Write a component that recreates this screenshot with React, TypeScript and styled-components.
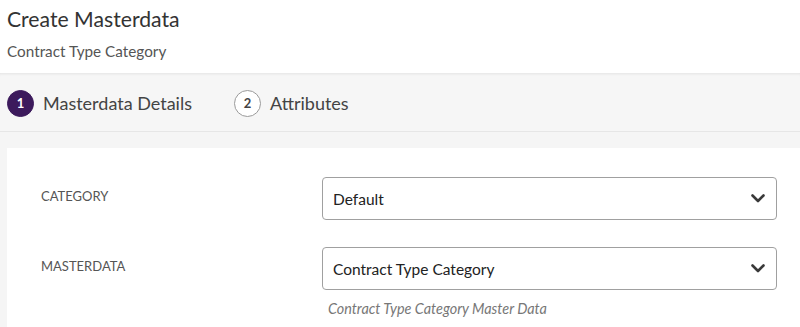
import styled, { createGlobalStyle } from "styled-components";

const GlobalStyle = createGlobalStyle`
  html, body {
    margin: 0;
    padding: 0;
    background: #ffffff;
    font-family: Lato, "Open Sans", sans-serif;
    color: #333333;
    overflow: hidden;
  }
`;

const Page = styled.div`
  width: 800px;
  height: 327px;
  display: flex;
  flex-direction: column;
  background: #f5f5f5;
`;

const Header = styled.header`
  height: 73px;
  padding: 6px 7px 0;
  box-sizing: border-box;
  background: #ffffff;
`;

const Title = styled.h1`
  margin: 0;
  font-size: 21.2px;
  font-weight: 400;
  line-height: 26px;
  color: #333333;
`;

const Subtitle = styled.div`
  margin-top: 10px;
  font-size: 15.3px;
  line-height: 19px;
  color: #555555;
`;

const Stepper = styled.nav`
  height: 59px;
  display: flex;
  align-items: center;
  gap: 42px;
  padding: 2px 7px 0;
  box-sizing: border-box;
  background: #f6f6f6;
  border-bottom: 1px solid #e6e6e6;
  box-shadow: inset 0 3px 3px -2px rgba(0, 0, 0, 0.08);
`;

const Step = styled.div`
  display: flex;
  align-items: center;
  gap: 9px;
`;

const StepBadge = styled.span<{ active?: boolean }>`
  width: 27px;
  height: 27px;
  box-sizing: border-box;
  border-radius: 50%;
  display: flex;
  align-items: center;
  justify-content: center;
  font-size: 13px;
  font-weight: 700;
  background: ${(p) => (p.active ? "#3c1a5c" : "#ffffff")};
  color: ${(p) => (p.active ? "#ffffff" : "#444444")};
  border: 1px solid ${(p) => (p.active ? "#3c1a5c" : "#9a9a9a")};
`;

const StepLabel = styled.span`
  font-size: 18px;
  color: #444444;
`;

const Body = styled.main`
  flex: 1;
  padding: 16px 0 0 7px;
`;

const Card = styled.section`
  background: #ffffff;
  height: 100%;
  padding: 29px 23px 0 34px;
  box-sizing: border-box;
  display: flex;
  flex-direction: column;
  gap: 27px;
`;

const Row = styled.div`
  display: grid;
  grid-template-columns: 281px 455px;
  align-items: start;
`;

const Label = styled.label`
  padding-top: 11px;
  font-size: 13px;
  color: #555555;
`;

const Field = styled.div`
  display: flex;
  flex-direction: column;
`;

const Select = styled.div`
  height: 43px;
  box-sizing: border-box;
  border: 1px solid #a0a0a0;
  border-radius: 4px;
  display: flex;
  align-items: center;
  justify-content: space-between;
  padding: 0 11px 0 10px;
  font-size: 15.5px;
  color: #222222;
`;

const Helper = styled.div`
  margin-top: 10px;
  padding-left: 6px;
  font-size: 14.4px;
  font-style: italic;
  color: #777777;
`;

const Chevron = () => (
  <svg width="14" height="9" viewBox="0 0 14 9">
    <path d="M1.5 1.5 L7 7 L12.5 1.5" fill="none" stroke="#3a3a3a" strokeWidth="2.6" strokeLinecap="round" strokeLinejoin="round" />
  </svg>
);

const fields = [
  { label: "CATEGORY", value: "Default" },
  { label: "MASTERDATA", value: "Contract Type Category", helper: "Contract Type Category Master Data" },
];

export default function App() {
  return (
    <>
      <GlobalStyle />
      <Page>
        <Header>
          <Title>Create Masterdata</Title>
          <Subtitle>Contract Type Category</Subtitle>
        </Header>
        <Stepper>
          <Step>
            <StepBadge active>1</StepBadge>
            <StepLabel>Masterdata Details</StepLabel>
          </Step>
          <Step>
            <StepBadge>2</StepBadge>
            <StepLabel>Attributes</StepLabel>
          </Step>
        </Stepper>
        <Body>
          <Card>
            {fields.map((f) => (
              <Row key={f.label}>
                <Label>{f.label}</Label>
                <Field>
                  <Select>
                    <span>{f.value}</span>
                    <Chevron />
                  </Select>
                  {f.helper && <Helper>{f.helper}</Helper>}
                </Field>
              </Row>
            ))}
          </Card>
        </Body>
      </Page>
    </>
  );
}
